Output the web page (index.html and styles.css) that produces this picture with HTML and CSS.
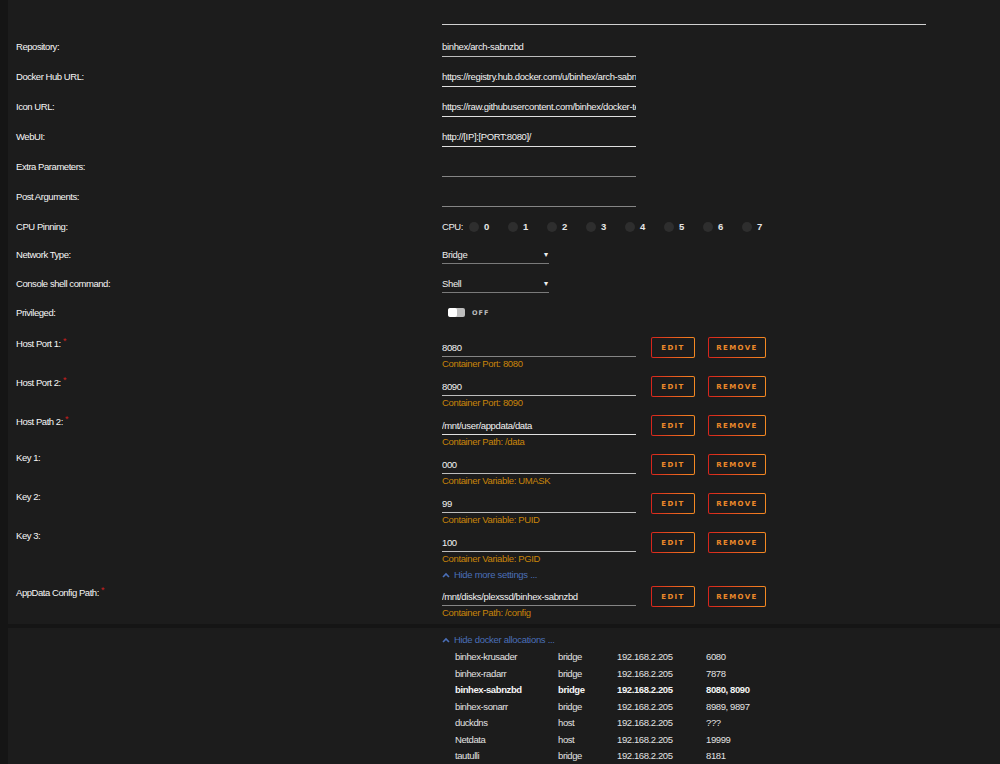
FILE: index.html
```html
<html lang="en">
<head>
  <meta charset="UTF-8">
  <title>Update Container</title>
  <link rel="stylesheet" href="styles.css">
</head>
<body>
  <div class="panel">
    <div class="row top"><div class="lbl"></div><div class="field"><div class="topline"></div></div></div>

    <div class="row"><div class="lbl">Repository:</div><div class="field"><input class="txt" value="binhex/arch-sabnzbd"></div></div>
    <div class="row"><div class="lbl">Docker Hub URL:</div><div class="field"><input class="txt bright" value="https://registry.hub.docker.com/u/binhex/arch-sabnzbd/"></div></div>
    <div class="row"><div class="lbl">Icon URL:</div><div class="field"><input class="txt bright" value="https://raw.githubusercontent.com/binhex/docker-templates/master/binhex/images/sabnzbd-icon.png"></div></div>
    <div class="row"><div class="lbl">WebUI:</div><div class="field"><input class="txt bright" value="http://[IP]:[PORT:8080]/"></div></div>
    <div class="row"><div class="lbl">Extra Parameters:</div><div class="field"><input class="txt dim" value=""></div></div>
    <div class="row"><div class="lbl">Post Arguments:</div><div class="field"><input class="txt dim" value=""></div></div>

    <div class="row cpu"><div class="lbl">CPU Pinning:</div>
      <div class="field cpus">
        <span class="cpu-title">CPU:</span>
        <span class="core"><i></i>0</span>
        <span class="core"><i></i>1</span>
        <span class="core"><i></i>2</span>
        <span class="core"><i></i>3</span>
        <span class="core"><i></i>4</span>
        <span class="core"><i></i>5</span>
        <span class="core"><i></i>6</span>
        <span class="core"><i></i>7</span>
      </div>
    </div>

    <div class="row sel"><div class="lbl">Network Type:</div><div class="field"><div class="select"><span>Bridge</span><span class="arrow">&#9662;</span></div></div></div>
    <div class="row sel"><div class="lbl">Console shell command:</div><div class="field"><div class="select"><span>Shell</span><span class="arrow">&#9662;</span></div></div></div>

    <div class="row priv"><div class="lbl">Privileged:</div>
      <div class="field switch-wrap"><span class="switch"><b></b></span><span class="off">OFF</span></div>
    </div>

    <div class="row port"><div class="lbl">Host Port 1: <span class="req">*</span></div>
      <div class="field">
        <div class="stack"><input class="txt dim" value="8080"><div class="help">Container Port: 8080</div></div>
        <button class="btn edit"><span>EDIT</span></button><button class="btn remove"><span>REMOVE</span></button>
      </div>
    </div>
    <div class="row port"><div class="lbl">Host Port 2: <span class="req">*</span></div>
      <div class="field">
        <div class="stack"><input class="txt" value="8090"><div class="help">Container Port: 8090</div></div>
        <button class="btn edit"><span>EDIT</span></button><button class="btn remove"><span>REMOVE</span></button>
      </div>
    </div>
    <div class="row port"><div class="lbl">Host Path 2: <span class="req">*</span></div>
      <div class="field">
        <div class="stack"><input class="txt bright" value="/mnt/user/appdata/data"><div class="help">Container Path: /data</div></div>
        <button class="btn edit"><span>EDIT</span></button><button class="btn remove"><span>REMOVE</span></button>
      </div>
    </div>
    <div class="row port"><div class="lbl">Key 1:</div>
      <div class="field">
        <div class="stack"><input class="txt" value="000"><div class="help">Container Variable: UMASK</div></div>
        <button class="btn edit"><span>EDIT</span></button><button class="btn remove"><span>REMOVE</span></button>
      </div>
    </div>
    <div class="row port"><div class="lbl">Key 2:</div>
      <div class="field">
        <div class="stack"><input class="txt" value="99"><div class="help">Container Variable: PUID</div></div>
        <button class="btn edit"><span>EDIT</span></button><button class="btn remove"><span>REMOVE</span></button>
      </div>
    </div>
    <div class="row port"><div class="lbl">Key 3:</div>
      <div class="field">
        <div class="stack"><input class="txt" value="100"><div class="help">Container Variable: PGID</div></div>
        <button class="btn edit"><span>EDIT</span></button><button class="btn remove"><span>REMOVE</span></button>
      </div>
    </div>

    <div class="row toggle-row"><div class="lbl"></div>
      <div class="field"><a class="more"><svg width="8" height="6" viewBox="0 0 8 6"><path d="M1 5 L4 2 L7 5" fill="none" stroke="currentColor" stroke-width="1.6"/></svg>Hide more settings ...</a></div>
    </div>

    <div class="row port"><div class="lbl">AppData Config Path: <span class="req">*</span></div>
      <div class="field">
        <div class="stack"><input class="txt dim" value="/mnt/disks/plexssd/binhex-sabnzbd"><div class="help">Container Path: /config</div></div>
        <button class="btn edit"><span>EDIT</span></button><button class="btn remove"><span>REMOVE</span></button>
      </div>
    </div>
  </div>

  <div class="panel alloc">
    <div class="row"><div class="lbl"></div>
      <div class="field column">
        <a class="more"><svg width="8" height="6" viewBox="0 0 8 6"><path d="M1 5 L4 2 L7 5" fill="none" stroke="currentColor" stroke-width="1.6"/></svg>Hide docker allocations ...</a>
        <div class="ports">
          <span>binhex-krusader</span><span>bridge</span><span>192.168.2.205</span><span>6080</span>
          <span>binhex-radarr</span><span>bridge</span><span>192.168.2.205</span><span>7878</span>
          <span class="me">binhex-sabnzbd</span><span class="me">bridge</span><span class="me">192.168.2.205</span><span class="me">8080, 8090</span>
          <span>binhex-sonarr</span><span>bridge</span><span>192.168.2.205</span><span>8989, 9897</span>
          <span>duckdns</span><span>host</span><span>192.168.2.205</span><span>???</span>
          <span>Netdata</span><span>host</span><span>192.168.2.205</span><span>19999</span>
          <span>tautulli</span><span>bridge</span><span>192.168.2.205</span><span>8181</span>
        </div>
      </div>
    </div>
  </div>
</body>
</html>
```

FILE: styles.css
```css
* {
  box-sizing: border-box;
}
html, body {
  margin: 0;
  height: 764px;
  background-color: #151515;
  color: #eeeeee;
  font-family: "Liberation Sans", Arial, sans-serif;
  font-size: 9.5px;
  letter-spacing: -0.45px;
  overflow: hidden;
}
.panel {
  margin-left: 8px;
  padding: 0 8px 9px;
  background-color: #1c1c1c;
}
.alloc {
  margin-top: 4px;
  padding-top: 6px;
  height: 200px;
}
.row {
  display: flex;
  align-items: flex-start;
  height: 30px;
}
.lbl {
  width: 426px;
  flex: none;
  padding-top: 8px;
  line-height: 12px;
  color: #f6f6f6;
}
.field {
  flex: none;
  display: flex;
  align-items: flex-start;
}
.row.top {
  height: 33px;
}
.topline {
  width: 484px;
  height: 25px;
  border-bottom: 1px solid #d0d0d0;
}
.txt {
  display: block;
  width: 194px;
  height: 20px;
  margin: 4px 0 0;
  padding: 0;
  border: none;
  border-bottom: 1px solid #bdbdbd;
  background: transparent;
  color: #f2f2f2;
  font-family: inherit;
  font-size: 9.5px;
  letter-spacing: -0.35px;
  outline: none;
}
.txt.bright {
  border-bottom-color: #e0e0e0;
}
.txt.dim {
  border-bottom-color: #858585;
}

/* cpu pinning */
.row.cpu {
  height: 28px;
}
.cpus {
  height: 20px;
  padding-top: 8px;
  line-height: 12px;
  align-items: center;
}
.cpu-title {
  margin-right: 6px;
}
.core {
  display: flex;
  align-items: center;
  width: 39px;
  font-weight: bold;
  color: #e6e6e6;
}
.core i {
  width: 10px;
  height: 10px;
  margin-right: 5px;
  border-radius: 50%;
  background-color: #2e2e2e;
}

/* selects */
.row.sel {
  height: 29px;
}
.select {
  display: flex;
  justify-content: space-between;
  width: 107px;
  height: 17px;
  margin-top: 6px;
  padding-right: 1px;
  line-height: 16px;
  border-bottom: 1px solid #7a7a7a;
  letter-spacing: -0.35px;
}
.arrow {
  font-size: 8px;
}

/* privileged switch */
.row.priv {
  height: 28px;
}
.switch-wrap {
  height: 18px;
  padding-top: 9px;
  align-items: center;
}
.switch {
  display: flex;
  width: 17px;
  height: 9px;
  margin-left: 6px;
  border-radius: 2px;
  background-color: #bdbdbd;
  overflow: hidden;
}
.switch b {
  width: 9px;
  height: 9px;
  border-radius: 2px;
  background-color: #ffffff;
}
.off {
  margin-left: 7px;
  font-family: "DejaVu Sans", sans-serif;
  font-size: 6.5px;
  font-weight: bold;
  letter-spacing: 1px;
  color: #bbbbbb;
}

/* port / path rows */
.row.port {
  height: 39px;
}
.req {
  color: #cc1f1f;
  font-size: 9px;
  vertical-align: 3px;
}
.stack {
  width: 194px;
}
.port .txt {
  height: 19px;
  margin-top: 11px;
}
.help {
  margin-top: 2px;
  line-height: 10px;
  color: #c8840a;
  letter-spacing: -0.35px;
  white-space: nowrap;
}
.btn {
  height: 21px;
  margin-top: 10px;
  padding: 1px;
  border: none;
  border-radius: 2px;
  background: linear-gradient(90deg, #d6241c, #f58a22);
  cursor: pointer;
}
.btn span {
  display: flex;
  align-items: center;
  justify-content: center;
  height: 100%;
  border-radius: 1px;
  background-color: #1c1c1c;
  color: #ec8a2a;
  font-family: "DejaVu Sans", sans-serif;
  font-size: 7px;
  font-weight: bold;
  letter-spacing: 1.4px;
}
.edit {
  width: 44px;
  margin-left: 15px;
}
.remove {
  width: 58px;
  margin-left: 13px;
}

/* show/hide links */
.row.toggle-row {
  height: 15px;
}
.toggle-row .field {
  padding-top: 8px;
}
.more {
  display: flex;
  align-items: center;
  line-height: 12px;
  color: #4a6fb8;
  letter-spacing: -0.3px;
  white-space: nowrap;
}
.more svg {
  margin-right: 4px;
}

/* allocations */
.alloc .row {
  height: auto;
}
.alloc .lbl {
  padding-top: 0;
}
.column {
  flex-direction: column;
}
.ports {
  display: grid;
  grid-template-columns: 103px 59px 89px 60px;
  grid-auto-rows: 16.5px;
  margin: 3px 0 0 13px;
  line-height: 16.5px;
  letter-spacing: -0.4px;
  color: #e2e2e2;
}
.ports .me {
  font-weight: bold;
  color: #f4f4f4;
}
```
